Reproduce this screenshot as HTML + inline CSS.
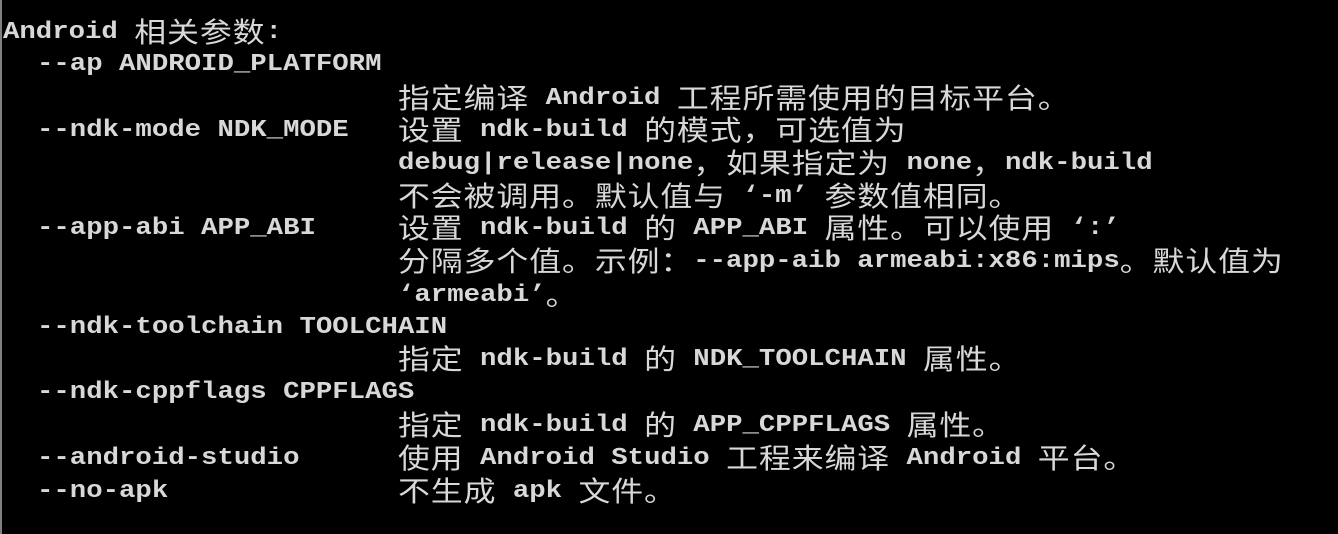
<!DOCTYPE html>
<html><head><meta charset="utf-8"><style>
html,body{margin:0;padding:0;background:#000;width:1338px;height:534px;overflow:hidden;}
body{position:relative;border-left:2px solid #808080;box-sizing:border-box;}
.l{position:absolute;white-space:pre;font-family:"Liberation Mono","Noto Sans CJK SC",monospace;font-weight:bold;font-size:24px;line-height:33px;height:33px;color:#d8d8d8;transform:scaleX(1.139);transform-origin:0 0;}
.l i{font-style:normal;font-weight:normal;font-family:"Noto Sans CJK SC","WenQuanYi Zen Hei",sans-serif;font-size:28px;letter-spacing:0.8px;vertical-align:top;line-height:31px;}
</style></head><body>
<div class="l" style="left:1px;top:16px">Android <i>相关参数</i>:</div>
<div class="l" style="left:35px;top:48px">--ap ANDROID_PLATFORM</div>
<div class="l" style="left:396px;top:82px"><i>指定编译</i> Android <i>工程所需使用的目标平台。</i></div>
<div class="l" style="left:35px;top:114px">--ndk-mode NDK_MODE</div>
<div class="l" style="left:396px;top:114px"><i>设置</i> ndk-build <i>的模式，可选值为</i></div>
<div class="l" style="left:396px;top:147px">debug|release|none<i>，如果指定为</i> none<i>，</i>ndk-build</div>
<div class="l" style="left:396px;top:180px"><i>不会被调用。默认值与</i> ‘-m’ <i>参数值相同。</i></div>
<div class="l" style="left:35px;top:212px">--app-abi APP_ABI</div>
<div class="l" style="left:396px;top:212px"><i>设置</i> ndk-build <i>的</i> APP_ABI <i>属性。可以使用</i> ‘:’</div>
<div class="l" style="left:396px;top:245px"><i>分隔多个值。示例：</i>--app-aib armeabi:x86:mips<i>。默认值为</i></div>
<div class="l" style="left:396px;top:279px">‘armeabi’<i>。</i></div>
<div class="l" style="left:35px;top:311px">--ndk-toolchain TOOLCHAIN</div>
<div class="l" style="left:396px;top:343px"><i>指定</i> ndk-build <i>的</i> NDK_TOOLCHAIN <i>属性。</i></div>
<div class="l" style="left:35px;top:376px">--ndk-cppflags CPPFLAGS</div>
<div class="l" style="left:396px;top:409px"><i>指定</i> ndk-build <i>的</i> APP_CPPFLAGS <i>属性。</i></div>
<div class="l" style="left:35px;top:442px">--android-studio</div>
<div class="l" style="left:396px;top:442px"><i>使用</i> Android Studio <i>工程来编译</i> Android <i>平台。</i></div>
<div class="l" style="left:35px;top:475px">--no-apk</div>
<div class="l" style="left:396px;top:475px"><i>不生成</i> apk <i>文件。</i></div>
</body></html>
